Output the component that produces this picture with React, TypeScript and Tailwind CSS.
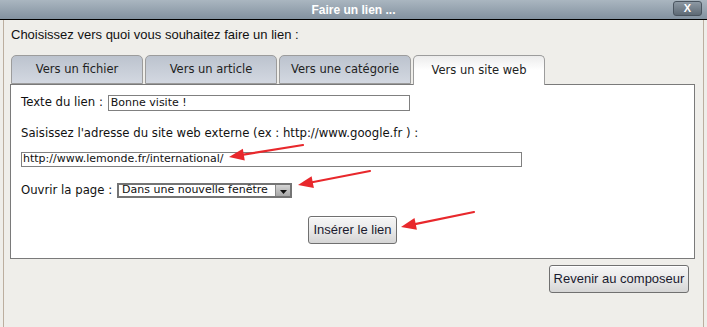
import React from "react";

const tabs = ["Vers un fichier", "Vers un article", "Vers une catégorie", "Vers un site web"];

// red annotation arrows, tail -> tip
const arrows = [
  { x1: 303, y1: 145, x2: 229, y2: 157 },
  { x1: 370, y1: 171, x2: 298, y2: 185 },
  { x1: 474, y1: 212, x2: 401, y2: 227 },
];

function Arrow({ x1, y1, x2, y2 }: { x1: number; y1: number; x2: number; y2: number }) {
  const dx = x2 - x1;
  const dy = y2 - y1;
  const len = Math.hypot(dx, dy);
  const ux = dx / len;
  const uy = dy / len;
  const head = 15;
  const half = 6;
  const bx = x2 - ux * head;
  const by = y2 - uy * head;
  const pts = `${x2},${y2} ${bx - uy * half},${by + ux * half} ${bx + uy * half},${by - ux * half}`;
  return (
    <g>
      <line x1={x1} y1={y1} x2={bx + ux * 2} y2={by + uy * 2} stroke="#e8282c" strokeWidth="2.2" strokeLinecap="round" />
      <polygon points={pts} fill="#e8282c" />
    </g>
  );
}

export default function App() {
  const label = "font-['DejaVu_Sans',sans-serif] text-[11.7px] text-[#111]";
  const field = "font-['DejaVu_Sans',sans-serif] text-[11px] text-[#111]";
  const tabText = "font-['DejaVu_Sans',sans-serif] text-[11.5px] text-[#222]";
  const btn =
    "rounded-[3px] border border-[#707070] bg-gradient-to-b from-[#f6f6f6] via-[#e9e9e9] to-[#d5d5d5] font-['Liberation_Sans',Arial,sans-serif] text-[13px] text-[#1a1a2e] shadow-[inset_0_1px_0_#fff]";

  return (
    <div className="relative w-[707px] h-[327px] overflow-hidden bg-[#efeeea] flex flex-col">
      {/* Title bar */}
      <div className="relative h-[20px] shrink-0 border-b border-black bg-gradient-to-b from-[#aab6c0] to-[#8392a0] flex items-center justify-center">
        <span className="font-['Liberation_Sans',Arial,sans-serif] text-[12px] font-bold text-white leading-none pt-[1px]">
          Faire un lien ...
        </span>
        <div className="absolute right-[5px] top-[1px] w-[29px] h-[15px] rounded-[3px] border border-[#4a5560] bg-gradient-to-b from-[#8d99a4] to-[#5e6a75] flex items-center justify-center">
          <span className="font-['Liberation_Sans',Arial,sans-serif] text-[11px] font-bold text-white leading-none">X</span>
        </div>
      </div>

      {/* Body */}
      <div className="flex-1 mx-[3px] border-x border-[#bcae9f] pl-[6px] pr-[8px] flex flex-col">
        <div className="font-['Liberation_Sans',Arial,sans-serif] text-[13px] text-[#111] mt-[7px] ml-[1px] leading-[16px]">
          Choisissez vers quoi vous souhaitez faire un lien :
        </div>

        {/* Tabs */}
        <div className="mt-[12px] ml-[1px] flex gap-[2px] h-[30px] relative z-10">
          {tabs.map((t, i) => {
            const active = i === tabs.length - 1;
            return (
              <div
                key={t}
                className={`w-[132px] rounded-t-[5px] border border-[#9c9c9c] flex items-center justify-center ${tabText} ${
                  active
                    ? "border-b-0 h-[30px] bg-gradient-to-b from-[#ececec] via-white to-white"
                    : "h-[29px] bg-gradient-to-b from-[#bcc3ce] to-[#d3d8e1]"
                }`}
              >
                {t}
              </div>
            );
          })}
        </div>

        {/* Panel */}
        <div className="h-[175px] -mt-[1px] bg-white border border-[#7a7a7a] pl-[10px] pt-[10px] flex flex-col">
          <div className="flex items-center gap-[5px] h-[16px]">
            <span className={label}>Texte du lien :</span>
            <div className="w-[302px] h-[16px] border border-[#808080] flex items-center px-[2px]">
              <span className={field}>Bonne visite !</span>
            </div>
          </div>

          <div className={`${label} mt-[14px]`}>
            Saisissez l'adresse du site web externe (ex : http://www.google.fr ) :
          </div>

          <div className="mt-[9px] w-[501px] h-[15px] border border-[#808080] flex items-center px-[1px]">
            <span className={field}>http://www.lemonde.fr/international/</span>
          </div>

          <div className="mt-[15px] flex items-center gap-[5px]">
            <span className={label}>Ouvrir la page :</span>
            <div className="w-[175px] h-[15px] border-2 border-[#747474] flex items-center pl-[3px]">
              <span className={`${field} flex-1 whitespace-nowrap`}>Dans une nouvelle fenêtre</span>
              <div className="w-[15px] h-[11px] shrink-0 bg-gradient-to-b from-[#d4d4d4] to-[#a8a8a8] border-l border-[#888] flex items-end justify-center pb-[2px]">
                <svg width="7" height="4" viewBox="0 0 7 4">
                  <polygon points="0,0 7,0 3.5,4" fill="#111" />
                </svg>
              </div>
            </div>
          </div>

          <div className="mt-[17px] flex justify-center pr-[10px]">
            <div className={`${btn} w-[89px] h-[28px] flex items-center justify-center`}>Insérer le lien</div>
          </div>
        </div>

        <div className="mt-[6px] flex justify-end pr-[6px]">
          <div className={`${btn} w-[140px] h-[28px] flex items-center justify-center`}>Revenir au composeur</div>
        </div>
      </div>

      {/* Annotations */}
      <svg className="absolute inset-0 pointer-events-none" width="707" height="327">
        {arrows.map((a, i) => (
          <Arrow key={i} {...a} />
        ))}
      </svg>
    </div>
  );
}
